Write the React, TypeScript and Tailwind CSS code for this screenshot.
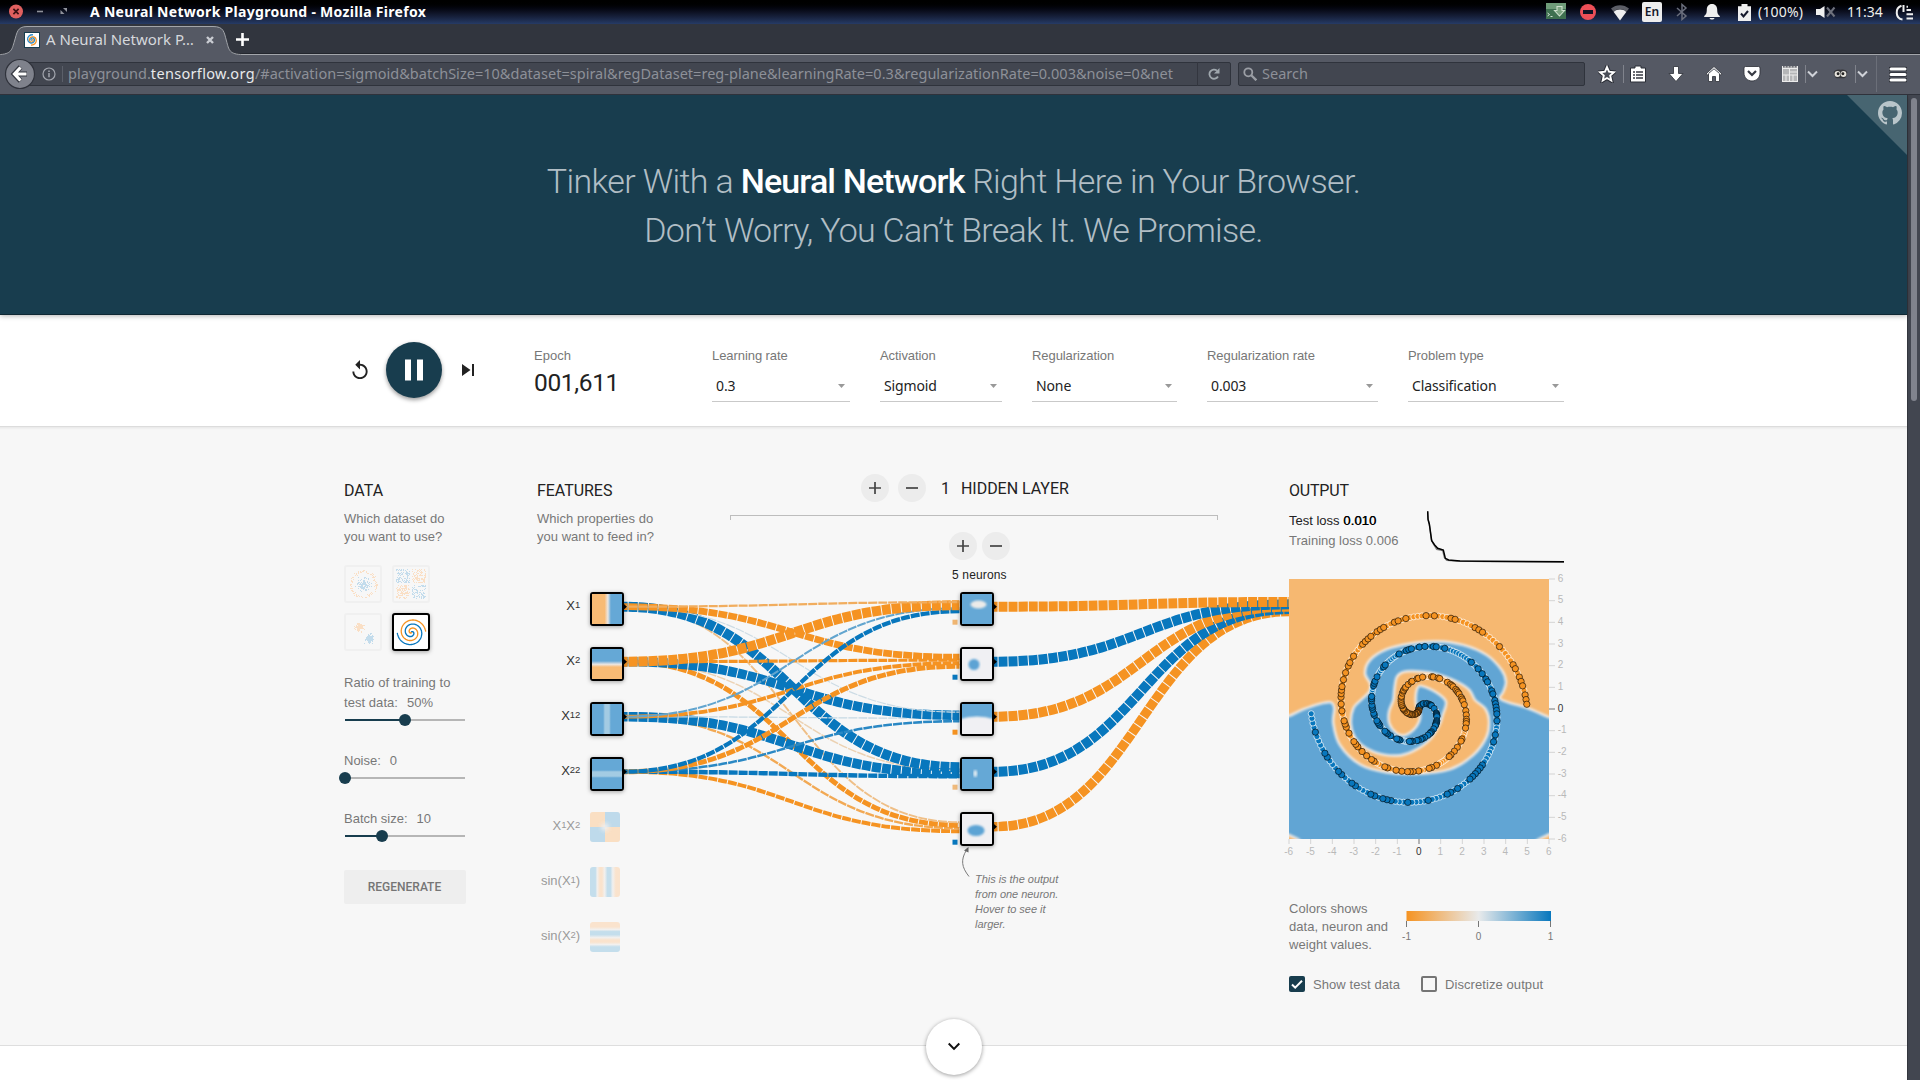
import React from "react";

const ORANGE = "#f59322";
const BLUE = "#0877bd";

const random = (seed: number) => {
  let s = seed;
  return () => {
    s = (s * 1664525 + 1013904223) % 4294967296;
    return s / 4294967296;
  };
};

/* ---------- colour scale shared by links and biases ---------- */
const mix = (a: number[], b: number[], t: number) =>
  `rgb(${a.map((v, i) => Math.round(v + (b[i] - v) * t)).join(",")})`;
const weightColor = (w: number) =>
  w < 0
    ? mix([232, 234, 235], [245, 147, 34], Math.min(1, -w))
    : mix([232, 234, 235], [8, 119, 189], Math.min(1, w));

/* ---------- window title bar ---------- */
function TitleBar() {
  return (
    <div className="flex h-6 items-center bg-linear-to-b from-black via-[#0d1122] to-[#263b66] pb-0.5 font-['Noto_Sans',sans-serif] text-[14px] text-[#eeeeec]">
      <svg className="ml-2 size-4" viewBox="0 0 16 16">
        <circle cx="8" cy="8.500" r="7" fill="#e0605f" />
        <path d="M5.400 5.900l5.200 5.200M10.600 5.900l-5.200 5.200" stroke="#3b1114" strokeWidth="1.700" />
      </svg>
      <svg className="ml-2 size-4" viewBox="0 0 16 16">
        <path d="M5 8.500h6" stroke="#8f929b" strokeWidth="1.600" />
      </svg>
      <svg className="ml-2 size-4" viewBox="0 0 16 16">
        <path d="M7 5h4v4zM4.500 7l4 4h-4z" fill="#8f929b" />
      </svg>
      <span className="ml-[18px] w-[345px] font-bold tracking-[0.3px] whitespace-nowrap text-white">
        A Neural Network Playground - Mozilla Firefox
      </span>
      <div className="ml-auto flex h-[22px] items-center pr-[7px]">
        <svg className="h-4 w-5" viewBox="0 0 20 16">
          <rect width="20" height="16" fill="#3f7050" />
          <rect y="0" width="20" height="6" fill="#6f9c79" />
          <path d="M11 3.500h5v4h2.500L13.500 13 8.500 7.500H11z" fill="#7da582" stroke="#cfe0ce" strokeWidth="1.100" />
          <path d="M1.500 10l2 1.500-2 1.500M4.500 13.500h2" stroke="#d5e5d5" fill="none" />
        </svg>
        <svg className="relative top-px ml-[14px] size-4" viewBox="0 0 16 16">
          <circle cx="8" cy="8" r="8" fill="#ed4f57" />
          <rect x="3" y="6" width="10" height="4" fill="#101426" />
        </svg>
        <svg className="relative top-px ml-[15px] h-[18px] w-[18px]" viewBox="0 0 18 18">
          <path d="M0 5.500C5 1 13 1 18 5.500L15.500 8.800C12 5.500 6 5.500 2.500 8.800z" fill="#5c5e66" />
          <path d="M2.700 9C6 5.800 12 5.800 15.300 9L9 17.500z" fill="#efefef" />
        </svg>
        <span className="relative top-px ml-[13px] flex h-5 w-5 items-center justify-center rounded-[2px] bg-[#ededed] text-[12px] leading-none font-semibold text-[#15182a]">
          En
        </span>
        <svg className="relative top-px ml-3 h-[18px] w-4" viewBox="0 0 16 18">
          <path d="M3 5l9 8-4 3.500v-15L12 5l-9 8" stroke="#6a6e7c" strokeWidth="1.500" fill="none" />
        </svg>
        <svg className="relative top-px ml-[14px] h-[18px] w-4" viewBox="0 0 16 18">
          <path d="M8 1c3.500 0 5.200 2.500 5.200 5.500 0 4 .8 5 2.600 6.500v1H.2v-1c1.800-1.500 2.600-2.500 2.600-6.500C2.800 3.500 4.500 1 8 1zM5.500 15h5c-.5 2-4.500 2-5 0z" fill="#efefef" />
        </svg>
        <svg className="relative top-px ml-[18px] h-[17px] w-[13px]" viewBox="0 0 13 17">
          <path d="M3.500 0h6v2.200H13V17H0V2.200h3.500z" fill="#efefef" />
          <path d="M3 9.500l2.500 3L10 7" stroke="#14182b" strokeWidth="2" fill="none" />
        </svg>
        <span className="ml-[7px] w-[46px] tracking-[0.2px]">(100%)</span>
        <svg className="relative top-px ml-[12px] h-3 w-[20px]" viewBox="0 0 20 12">
          <path d="M0 3h4l4.500-3v12L4 9H0z" fill="#efefef" />
          <path d="M11 1.500l7.500 9M18.500 1.500l-7.500 9" stroke="#6e717c" strokeWidth="2" />
        </svg>
        <span className="ml-[11px] w-[36px]">11:34</span>
        <svg className="relative top-px ml-3 h-[17px] w-[18px]" viewBox="0 0 18 17">
          <path d="M6.500 1.800C-.2 4 .2 14.500 7.500 15.500M8.500 1v7" stroke="#efefef" strokeWidth="2" fill="none" />
          <path d="M11.500 6h4.500M11.500 10.200h6.500M11.500 14.500h6.500M11.500 2.800h1.500" stroke="#efefef" strokeWidth="2" />
        </svg>
      </div>
    </div>
  );
}

function TabBar() {
  return (
    <div className="relative flex h-[31px] items-center bg-[#31353e] font-['Noto_Sans',sans-serif] text-[15px] text-[#d6d8dc]">
      <svg className="absolute inset-0 h-[31px] w-[1920px]" viewBox="0 0 1920 31">
        <path d="M0 29.500H1920" stroke="#23262d" />
        <path
          d="M-2 30.500C12 30.500 12 25 14.500 17S17 2.500 27 2.500H213C224 2.500 224 8 226.500 17S229 30.500 243 30.500H1922V33H-2z"
          fill="#555964"
          stroke="#a3a6ab"
        />
      </svg>
      <svg className="relative ml-6 size-4" viewBox="0 0 16 16">
        <rect x=".5" y=".5" width="15" height="15" fill="#fff" stroke="#183d4e" />
        <path d="M8 8c1-1 2 1 .5 1.800C6 11 4.300 8 6 6c2-2.200 6-1.200 6.300 2 .3 3-2.300 5.300-5.300 5" stroke={ORANGE} strokeWidth="1.300" fill="none" />
        <path d="M8 8c-1 .7-1.800-.8-.5-1.800 2-1.200 4 1.500 2.600 3.500-2 2.500-6 1.200-6.500-2C3.200 4.500 6 2.500 9 2.800" stroke="#2c8bc9" strokeWidth="1.300" fill="none" />
      </svg>
      <span className="relative ml-[6px] w-[152px] whitespace-nowrap">A Neural Network P…</span>
      <svg className="relative ml-[7px] size-[10px]" viewBox="0 0 10 10">
        <path d="M2 2l6 6M8 2L2 8" stroke="#c9ccd2" strokeWidth="2.400" />
      </svg>
      <svg className="relative ml-[20px] size-[15px]" viewBox="0 0 15 15">
        <path d="M7.500 1v13M1 7.500h13" stroke="#fff" strokeWidth="2.600" />
      </svg>
    </div>
  );
}

const Sep = ({ tall = false }: { tall?: boolean }) => (
  <span className={tall ? "ml-2 h-9 w-px bg-[#6b6f79]" : "ml-[7px] h-[18px] w-px bg-[#80838c]"} />
);
const Chevron = () => (
  <svg className="ml-px h-2 w-[11px]" viewBox="0 0 11 8">
    <path d="M1 1.500l4.500 4.500L10 1.500" stroke="#cfd2d8" strokeWidth="2" fill="none" />
  </svg>
);

function Toolbar() {
  return (
    <div className="flex h-10 items-center border-b border-[#2f323b] bg-[#555964] pb-px font-['Noto_Sans',sans-serif] text-[14.500px] text-[#8d9098]">
      <svg className="relative z-10 ml-1 size-8 shrink-0" viewBox="0 0 32 32">
        <circle cx="16" cy="16" r="14.500" fill="#7f828c" stroke="#30333c" strokeWidth="1.200" />
        <path d="M16.500 9L10 16l6.500 7M10.500 16H23" stroke="#33363f" strokeWidth="5" fill="none" />
        <path d="M16.500 9.500L10.500 16l6 6.500M11 16h11.500" stroke="#fff" strokeWidth="3.200" fill="none" />
      </svg>
      <div className="-ml-2 flex h-6 w-[1203px] items-center rounded-r-[2px] border border-[#2f333c] bg-[#424650] pl-[13px]">
        <svg className="size-[14px] shrink-0" viewBox="0 0 14 14">
          <circle cx="7" cy="7" r="6" fill="none" stroke="#a2a5ad" strokeWidth="1.200" />
          <path d="M7 6v4.300M7 3.500v1.500" stroke="#a2a5ad" strokeWidth="1.500" />
        </svg>
        <span className="ml-[6px] h-4 w-px shrink-0 bg-[#5b5f69]" />
        <span className="ml-[5px] w-[1112px] shrink-0 whitespace-nowrap">
          <span className="tracking-[0.050px]">playground.</span>
          <span className="tracking-[0.320px] text-[#e8e9eb]">tensorflow.org</span>
          <span className="tracking-[0.020px]">
            /#activation=sigmoid&amp;batchSize=10&amp;dataset=spiral&amp;regDataset=reg-plane&amp;learningRate=0.3&amp;regularizationRate=0.003&amp;noise=0&amp;net
          </span>
        </span>
        <span className="ml-[17px] h-6 w-px shrink-0 bg-[#33363f]" />
        <svg className="ml-[10px] size-3 shrink-0" viewBox="0 0 12 12">
          <path d="M10 8.500A4.600 4.600 0 1 1 9 2.600" stroke="#9fa7ad" strokeWidth="1.800" fill="none" />
          <path d="M11.500 0v5.500H6z" fill="#9fa7ad" />
        </svg>
      </div>
      <div className="ml-[7px] flex h-6 w-[347px] items-center rounded-[2px] border border-[#2f333c] bg-[#424650] pl-1">
        <svg className="size-[14px]" viewBox="0 0 14 14">
          <circle cx="5.300" cy="5.300" r="4" fill="none" stroke="#9b9ea5" strokeWidth="1.800" />
          <path d="M8.300 8.300l5 5" stroke="#9b9ea5" strokeWidth="2.300" />
        </svg>
        <span className="ml-[5px]">Search</span>
      </div>
      <svg className="ml-[13px] size-[18px]" viewBox="0 0 18 18">
        <path d="M9 2l2 4.700 5 .5-3.800 3.400 1.100 5L9 13l-4.300 2.600 1.100-5L2 7.200l5-.5z" fill="none" stroke="#2b2e36" strokeWidth="4" />
        <path d="M9 2l2 4.700 5 .5-3.800 3.400 1.100 5L9 13l-4.300 2.600 1.100-5L2 7.200l5-.5z" fill="#4a4e58" stroke="#fff" strokeWidth="1.900" />
      </svg>
      <Sep />
      <svg className="ml-[6px] h-[18px] w-4" viewBox="0 0 16 18">
        <path d="M5 3V1h6v2h4.500v14H.5V3z" fill="#fff" stroke="#2b2e36" />
        <path d="M3 7h2M6 7h7M3 10h2M6 10h7M3 13h2M6 13h7" stroke="#363942" strokeWidth="1.500" />
      </svg>
      <svg className="ml-[22px] size-4" viewBox="0 0 16 16">
        <path d="M5.500.5h5v7H15L8 15.500 1 7.500h4.500z" fill="#fff" stroke="#2b2e36" strokeWidth=".8" />
      </svg>
      <svg className="ml-[21px] h-4 w-[18px]" viewBox="0 0 18 16">
        <path d="M9 .5L1 8l1 1.300L3.500 8v7.500h4v-5h3v5h4V8L16 9.300 17 8z" fill="#fff" stroke="#2b2e36" strokeWidth=".8" />
        <path d="M3.500 7.500L9 2.800l5.500 4.700" stroke="#4a4e58" fill="none" />
      </svg>
      <svg className="ml-5 h-4 w-[18px]" viewBox="0 0 18 16">
        <path d="M1 2q0-1.500 1.500-1.500h13Q17 .5 17 2v5c0 4.500-3.500 8-8 8s-8-3.500-8-8z" fill="#fff" stroke="#2b2e36" strokeWidth=".8" />
        <path d="M5 5l4 4 4-4" stroke="#363942" strokeWidth="2.200" fill="none" />
      </svg>
      <svg className="ml-[21px] size-4" viewBox="0 0 16 16">
        <path d="M0 0h16v16H0z" fill="#b5b6b8" />
        <path d="M0 2.500h16M7.500 3v13M0 9h16M7.500 6h8M4 9v7M11 9v7M.5 0v16M15.500 0v16M0 15.500h16" stroke="#ececec" />
        <path d="M1 .8h14" stroke="#4b4e56" strokeDasharray="1.500 1.500" />
      </svg>
      <Sep />
      <Chevron />
      <svg className="ml-[15px] h-[12px] w-[15px]" viewBox="0 0 16 14">
        <path d="M0 5q2-4 8-3 6-1 8 3-1 7-4 7H4Q1 12 0 5z" fill="#35363a" />
        <circle cx="4.500" cy="7" r="3.400" fill="#e7e4dd" />
        <circle cx="11.500" cy="7" r="3.400" fill="#e7e4dd" />
        <circle cx="5.200" cy="6.800" r="1.700" fill="#222" />
        <circle cx="10.800" cy="6.800" r="1.700" fill="#222" />
      </svg>
      <Sep />
      <Chevron />
      <Sep tall />
      <svg className="ml-[12px] h-[17px] w-[18px]" viewBox="0 0 18 17">
        <path d="M1.500 3h15M1.500 8.500h15M1.500 14h15" stroke="#2b2e36" strokeWidth="4.600" strokeLinecap="round" />
        <path d="M2 3h14M2 8.500h14M2 14h14" stroke="#fff" strokeWidth="3" strokeLinecap="round" />
      </svg>
    </div>
  );
}

/* ---------- page header and controls ---------- */
function Header() {
  return (
    <header className="relative h-[220px] border-b border-[#0f2833] bg-[#183d4e] pt-[62px] text-center font-['Roboto',sans-serif] text-[34px] leading-[49.300px] font-light tracking-[-0.630px] text-[#b1bec5] shadow-[0_1px_5px_rgba(0,0,0,0.3)]">
      <h1>
        Tinker With a <b className="font-medium tracking-[-0.880px] text-white">Neural Network</b> Right Here in Your Browser.
        <br />
        <span className="tracking-[-0.730px]">Don’t Worry, You Can’t Break It. We Promise.</span>
      </h1>
      <svg className="absolute top-0 right-0 size-[60px]" viewBox="0 0 60 60">
        <path d="M0 0h60v60z" fill="#476571" />
        <path
          transform="translate(31 6) scale(1.500)"
          fill="#b9c5ca"
          d="M8 0C3.580 0 0 3.580 0 8c0 3.540 2.290 6.530 5.470 7.590.4.070.55-.17.55-.38 0-.19-.01-.82-.01-1.490-2.010.37-2.530-.49-2.690-.94-.09-.23-.48-.94-.82-1.130-.28-.15-.68-.52-.01-.53.63-.01 1.080.58 1.230.82.72 1.210 1.870.87 2.330.66.07-.52.28-.87.51-1.070-1.780-.2-3.640-.89-3.640-3.950 0-.87.31-1.590.82-2.150-.08-.2-.36-1.020.08-2.120 0 0 .67-.21 2.200.82.64-.18 1.320-.27 2-.27.68 0 1.360.09 2 .27 1.530-1.040 2.200-.82 2.200-.82.44 1.100.16 1.920.08 2.120.51.56.82 1.270.82 2.150 0 3.070-1.870 3.750-3.650 3.950.29.25.54.73.54 1.480 0 1.070-.01 1.930-.01 2.200 0 .21.15.46.55.38A8.013 8.013 0 0016 8c0-4.420-3.580-8-8-8z"
        />
      </svg>
    </header>
  );
}

const selects = [
  { label: "Learning rate", value: "0.3", box: "ml-[82px] w-[138px]" },
  { label: "Activation", value: "Sigmoid", box: "ml-[30px] w-[122px]" },
  { label: "Regularization", value: "None", box: "ml-[30px] w-[145px]" },
  { label: "Regularization rate", value: "0.003", box: "ml-[30px] w-[171px]" },
  { label: "Problem type", value: "Classification", box: "ml-[30px] w-[156px]" },
];

function Controls() {
  return (
    <section className="flex h-[112px] border-b border-[#dcdcdc] bg-white pl-[350px] font-['Liberation_Sans',sans-serif] text-[13px] leading-4 text-[#777]">
      <div className="flex h-[109px] items-center">
        <svg className="size-5" viewBox="1.500 1 21 21" fill="#222">
          <path d="M12 5V1L7 6l5 5V7c3.310 0 6 2.690 6 6s-2.690 6-6 6-6-2.690-6-6H4c0 4.420 3.580 8 8 8s8-3.580 8-8-3.580-8-8-8z" />
        </svg>
        <div className="ml-4 flex size-14 items-center justify-center rounded-full bg-[#183d4e] shadow-[0_2px_4px_rgba(0,0,0,0.4)]">
          <svg className="size-9" viewBox="0 0 24 24" fill="#fff">
            <path d="M6 19h4V5H6v14zm8-14v14h4V5h-4z" />
          </svg>
        </div>
        <svg className="ml-[14px] size-6" viewBox="0 0 24 24" fill="#222">
          <path d="M6 18l8.500-6L6 6v12zM16 6v12h2V6h-2z" />
        </svg>
      </div>
      <div className="ml-[54px] w-24 pt-[33px]">
        Epoch
        <div className="mt-1 font-['Roboto',sans-serif] text-[24.500px] leading-[30px] font-normal tracking-[-0.350px] text-[#222]">001,611</div>
      </div>
      {selects.map((s) => (
        <div key={s.label} className={`${s.box} pt-[33px]`}>
          <span className="tracking-[-0.070px]">{s.label}</span>
          <div className="mt-[7px] flex h-[31px] items-center justify-between border-b border-[#c9c9c9] pr-[5px] pl-1 font-['Noto_Sans',sans-serif] text-[14px] tracking-[-0.120px] text-[#222]">
            {s.value}
            <svg className="h-1 w-[7px]" viewBox="0 0 7 4">
              <path d="M0 0h7L3.500 4z" fill="#999" />
            </svg>
          </div>
        </div>
      ))}
    </section>
  );
}

/* ---------- data column ---------- */
const OL = "#fadfc5";
const BL = "#c3dcec";

function scatter(kind: string) {
  const r = random(kind.length * 977 + 5);
  const out: { x: number; y: number; c: string }[] = [];
  const gauss = () => (r() + r() + r() - 1.5) / 1.5;
  for (let i = 0; i < 230; i++) {
    if (kind === "circle") {
      const a = r() * Math.PI * 2;
      const d = 11 + r() * 3;
      if (i % 2) out.push({ x: 17 + Math.cos(a) * d, y: 17 + Math.sin(a) * d, c: OL });
      else out.push({ x: 17 + gauss() * 9, y: 17 + gauss() * 9, c: BL });
    } else if (kind === "quadrants") {
      for (let k = 0; k < 2; k++) {
        const x = 2 + r() * 29;
        const y = 2 + r() * 29;
        if (Math.abs(x - 16.500) < 1 || Math.abs(y - 16.500) < 1) continue;
        out.push({ x, y, c: (x - 16.500) * (y - 16.500) > 0 ? BL : OL });
      }
    } else {
      const o = i % 2 === 0;
      out.push({ x: (o ? 13 : 23) + gauss() * 6, y: (o ? 11.500 : 23) + gauss() * 6, c: o ? OL : BL });
    }
  }
  return out;
}

function Thumb({ kind }: { kind: string }) {
  return (
    <div className="size-[38px] rounded-[3px] border-2 border-[#f0f0f0]">
      <svg className="size-[34px]" viewBox="0 0 34 34" shapeRendering="crispEdges">
        {scatter(kind).map((p, i) => (
          <rect key={i} x={Math.round(p.x)} y={Math.round(p.y)} width="1" height="1" fill={p.c} />
        ))}
      </svg>
    </div>
  );
}

const spiral = (scale: number, phase: number, cx: number, cy: number) =>
  Array.from({ length: 250 }, (_, i) => {
    const r = (i / 250) * 5;
    const t = ((1.750 * i) / 250) * 2 * Math.PI + phase;
    return [cx + r * Math.sin(t) * scale, cy - r * Math.cos(t) * scale];
  });
const polyline = (pts: number[][]) => pts.map((p) => p[0].toFixed(1) + "," + p[1].toFixed(1)).join(" ");

function Slider({ pct }: { pct: number }) {
  return (
    <div className="relative flex h-3 w-[121px] items-center pl-px">
      <div className="h-0.5 bg-[#183d4e]" style={{ width: `${pct}%` }} />
      <div className="h-0.5 flex-1 bg-[#b6b6b6]" />
      <div className="absolute -ml-[6px] size-3 rounded-full bg-[#183d4e]" style={{ left: `${pct + 0.8}%` }} />
    </div>
  );
}

function DataColumn() {
  return (
    <div className="w-[193px] shrink-0">
      <h2 className="relative top-px font-['Roboto',sans-serif] text-[16px] leading-5 text-[#222]">DATA</h2>
      <p className="mt-[10px] w-[120px] leading-[18px]">
        Which dataset do
        <br />
        you want to use?
      </p>
      <div className="mt-[19px] grid w-[86px] grid-cols-2 gap-[10px]">
        <Thumb kind="circle" />
        <Thumb kind="quadrants" />
        <Thumb kind="gauss" />
        <div className="size-[38px] rounded-[3px] border-2 border-black bg-white shadow-[0_1px_4px_rgba(0,0,0,0.35)]">
          <svg className="size-[34px]" viewBox="0 0 34 34" fill="none" strokeWidth="1.300">
            <polyline points={polyline(spiral(2.850, 0, 17.500, 17.300))} stroke={BLUE} />
            <polyline points={polyline(spiral(2.850, Math.PI, 17.500, 17.300))} stroke={ORANGE} />
          </svg>
        </div>
      </div>
      <div className="mt-[22px] leading-5">
        <p className="tracking-[0.050px]">
          Ratio of training to
          <br />
          test data:<span className="ml-[9px]">50%</span>
        </p>
        <div className="mt-px">
          <Slider pct={50} />
        </div>
        <p className="mt-[25px]">Noise:<span className="ml-[9px]">0</span></p>
        <div className="mt-px">
          <Slider pct={0} />
        </div>
        <p className="mt-[25px]">Batch size:<span className="ml-[9px]">10</span></p>
        <div className="mt-px">
          <Slider pct={31} />
        </div>
      </div>
      <button className="mt-7 block h-[34px] w-[122px] rounded-[2px] bg-[#eeeeee] pr-px font-['Roboto',sans-serif] text-[12px] font-medium text-[#757575]">
        REGENERATE
      </button>
    </div>
  );
}

/* ---------- network ---------- */
// weights[target][source]
const hiddenWeights = [
  [-0.700, -5, 0.600, 1.800],
  [-3.200, -1.200, -1.600, -2.200],
  [0.120, 4.700, 0.150, 0.850],
  [5, -0.280, 4.800, 1.900],
  [-0.500, -2.200, -0.750, -1.650],
];
const outputWeights = [-5, 5, -5, 5, -4.700];

const nodeY = (i: number) => 606.700 + 55 * i;

function link(x1: number, y1: number, x2: number, y2: number) {
  const m = (x1 + x2) / 2;
  return `M${x1} ${y1}C${m} ${y1} ${m} ${y2} ${x2} ${y2}`;
}

function Links() {
  const links: { d: string; w: number }[] = [];
  hiddenWeights.forEach((row, t) =>
    row.forEach((w, s) => {
      links.push({ d: link(623.500, nodeY(s), 959.500, nodeY(t) + ((s - 1.500) / 4) * 12), w });
    }),
  );
  outputWeights.forEach((w, s) => {
    links.push({ d: link(993.500, nodeY(s), 1290, 606.700 + ((s - 2) / 5) * 12), w });
  });
  links.reverse();
  return (
    <svg className="absolute top-0 left-0 h-[400px] w-[752px]" viewBox="537 592 752 400" fill="none">
      {links.map((l, i) => (
        <path
          key={i}
          d={l.d}
          stroke={weightColor(l.w)}
          strokeWidth={1 + (9 * Math.min(5, Math.abs(l.w))) / 5}
          strokeDasharray="9 1"
          strokeDashoffset="-5"
        />
      ))}
      {[0, 1, 2, 3].map((i) => (
        <path key={i} d={`M623 ${nodeY(i) - 3.500}l4 3.500l-4 3.500z`} fill="#000" />
      ))}
      {[0, 1, 2, 3, 4].map((i) => (
        <path key={i} d={`M993 ${nodeY(i) - 3.500}l4 3.500l-4 3.500z`} fill="#000" />
      ))}
      {[-0.600, 1, -1, -0.550, 1].map((b, i) => (
        <rect key={i} x="952.500" y={619.700 + 55 * i} width="5" height="5" fill={weightColor(b)} />
      ))}
      <path d="M969 876.500C961.500 867 960.500 860 966.500 850" stroke="#7a7a7a" />
      <path d="M968.500 847l-4.500 3.500l4.500 2z" fill="#666" />
    </svg>
  );
}

const featureFill: Record<string, React.ReactNode> = {
  x1: <div className="size-full bg-linear-to-r from-[#f8bb75] from-42% via-[#e9e6e3] via-53% to-[#65a8d6] to-63%" />,
  x2: <div className="size-full bg-linear-to-b from-[#65a8d6] from-40% via-[#e9e6e3] via-51% to-[#f8bb75] to-60%" />,
  x12: <div className="size-full bg-[linear-gradient(90deg,#65a8d6_37%,#a3cbe3_43%,#a3cbe3_57%,#65a8d6_63%)]" />,
  x22: <div className="size-full bg-[linear-gradient(180deg,#65a8d6_37%,#a3cbe3_43%,#a3cbe3_57%,#65a8d6_63%)]" />,
  x1x2: (
    <div className="grid size-full grid-cols-2 bg-[#f0eeeb]">
      <div className="bg-[#fadfc3]" />
      <div className="bg-[#bedaeb]" />
      <div className="bg-[#bedaeb]" />
      <div className="bg-[#fadfc3]" />
      <div className="absolute top-[11px] left-[11px] size-2 rounded-full bg-[#eeeeee] blur-[2px]" />
    </div>
  ),
  sinx1: (
    <div className="size-full bg-[linear-gradient(90deg,#c4deec_18%,#f2f0ee_24%,#fae3cd_33%,#fae3cd_40%,#f2f0ee_49%,#c4deec_58%,#c4deec_68%,#f2f0ee_76%,#fae3cd_86%)]" />
  ),
  sinx2: (
    <div className="size-full bg-[linear-gradient(180deg,#fae3cd_16%,#f2f0ee_25%,#c4deec_32%,#c4deec_42%,#f2f0ee_52%,#fae3cd_60%,#fae3cd_67%,#f2f0ee_75%,#c4deec_83%)]" />
  ),
};

const Small = ({ children }: { children: React.ReactNode }) => (
  <span className="relative -top-[2px] text-[9.500px] tracking-[-0.200px]">{children}</span>
);
const features = [
  { id: "x1", on: true, label: <>X<Small>1</Small></> },
  { id: "x2", on: true, label: <>X<Small>2</Small></> },
  { id: "x12", on: true, label: <>X<Small>12</Small></> },
  { id: "x22", on: true, label: <>X<Small>22</Small></> },
  { id: "x1x2", on: false, label: <>X<Small>1</Small>X<Small>2</Small></> },
  { id: "sinx1", on: false, label: <>sin(X<Small>1</Small>)</> },
  { id: "sinx2", on: false, label: <>sin(X<Small>2</Small>)</> },
];

const neuronArt = [
  <svg className="size-[30px]" viewBox="0 0 30 30" key="0">
    <rect width="30" height="30" fill="#65a8d6" />
    <ellipse cx="16.500" cy="10.500" rx="8" ry="4" fill="#ecebe9" filter="url(#soft)" />
  </svg>,
  <svg className="size-[30px]" viewBox="0 0 30 30" key="1">
    <rect width="30" height="30" fill="#f0f0f3" />
    <circle cx="12" cy="15.500" r="5.500" fill="#5ca3d4" filter="url(#soft)" />
  </svg>,
  <svg className="size-[30px]" viewBox="0 0 30 30" key="2">
    <rect width="30" height="30" fill="#f0f0f3" />
    <path d="M-3-3h36V15.500Q15 9.500-3 15.500z" fill="#65a8d6" filter="url(#soft)" />
    <path d="M0 0h30v11H0z" fill="#65a8d6" />
  </svg>,
  <svg className="size-[30px]" viewBox="0 0 30 30" key="3">
    <rect width="30" height="30" fill="#65a8d6" />
    <ellipse cx="13.300" cy="14.500" rx="1.800" ry="3.500" fill="#e4edf3" filter="url(#soft)" />
  </svg>,
  <svg className="size-[30px]" viewBox="0 0 30 30" key="4">
    <rect width="30" height="30" fill="#f0f0f3" />
    <ellipse cx="14" cy="16.500" rx="8.500" ry="5.500" fill="#5ca3d4" filter="url(#soft)" />
  </svg>,
];

function RoundButton({ sign }: { sign: string }) {
  return (
    <button className="flex size-7 items-center justify-center rounded-full bg-[#ececec]">
      <svg className="size-3" viewBox="0 0 12 12" stroke="#444" strokeWidth="1.700">
        <path d={sign === "+" ? "M6 0v12M0 6h12" : "M0 6h12"} />
      </svg>
    </button>
  );
}

function Network() {
  return (
    <div className="w-[752px] shrink-0">
      <svg className="absolute size-0">
        <filter id="soft">
          <feGaussianBlur stdDeviation="1.100" />
        </filter>
      </svg>
      <div className="flex h-[112px]">
        <div className="w-[193px]">
          <h2 className="relative top-px font-['Roboto',sans-serif] text-[16px] leading-5 tracking-[-0.050px] text-[#222]">FEATURES</h2>
          <p className="mt-[10px] leading-[18px] tracking-[0.030px]">
            Which properties do
            <br />
            you want to feed in?
          </p>
        </div>
        <div className="-mt-[6px] w-[488px]">
          <div className="flex items-center pl-[131px] font-['Roboto',sans-serif] text-[16px] text-[#222]">
            <RoundButton sign="+" />
            <span className="ml-[9px]">
              <RoundButton sign="-" />
            </span>
            <span className="mt-0.5 ml-[15px]">1</span>
            <span className="mt-0.5 ml-[11px] tracking-[-0.040px]">HIDDEN LAYER</span>
          </div>
          <div className="mt-[13px] h-[5px] border border-b-0 border-[#bdbdbd]" />
          <div className="mt-3 flex gap-[5px] pl-[219px]">
            <RoundButton sign="+" />
            <RoundButton sign="-" />
          </div>
          <div className="mt-[5px] pl-[222px] text-[12px] leading-5 tracking-[0.150px] text-[#222]">5 neurons</div>
        </div>
      </div>
      <div className="relative flex">
        <Links />
        <div className="relative w-[87px]">
          {features.map((f) => (
            <div key={f.id} className="flex h-[55px] items-start gap-[10px]">
              <div className={`w-[43px] text-right leading-[27px] whitespace-nowrap ${f.on ? "text-[#333]" : "text-[#9a9a9a]"}`}>{f.label}</div>
              {f.on ? (
                <div className="size-[34px] shrink-0 rounded-[3px] border-2 border-black shadow-[0_1px_4px_rgba(0,0,0,0.35)]">{featureFill[f.id]}</div>
              ) : (
                <div className="relative size-[30px] shrink-0 overflow-hidden rounded-[3px]">{featureFill[f.id]}</div>
              )}
            </div>
          ))}
        </div>
        <div className="relative ml-[336px]">
          {neuronArt.map((art, i) => (
            <div key={i} className="h-[55px]">
              <div className="size-[34px] overflow-hidden rounded-[3px] border-2 border-black shadow-[0_1px_4px_rgba(0,0,0,0.35)]">{art}</div>
            </div>
          ))}
          <p className="mt-[5px] ml-[15px] w-[100px] text-[11px] leading-[15px] italic tracking-[-0.030px]">
            This is the output
            <br />
            from one neuron.
            <br />
            Hover to see it
            <br />
            larger.
          </p>
        </div>
      </div>
    </div>
  );
}

/* ---------- output ---------- */
// Decision boundary between the two classes
const boundary: number[][] = [
  [30, 745], [57, 738], [100, 718], [150, 701], [182, 697], [193, 715], [190, 760], [210, 825], [270, 883], [350, 907], [450, 911],
  [540, 898], [610, 855], [650, 800], [657, 750], [645, 715], [615, 690], [598, 660], [560, 635], [500, 612], [440, 604],
  [400, 606], [380, 622], [373, 660], [370, 690], [357, 725], [358, 760], [378, 788], [402, 796], [430, 780], [447, 755],
  [450, 730], [440, 712], [437, 685], [442, 655], [455, 648], [500, 668], [528, 695], [518, 735], [508, 765], [480, 808],
  [430, 843], [380, 857], [310, 845], [260, 810], [243, 765], [250, 715], [275, 688], [298, 665], [300, 640], [285, 610],
  [300, 570], [350, 538], [420, 521], [500, 514], [580, 525], [650, 555], [695, 600], [708, 635], [700, 665], [690, 685],
  [720, 699], [770, 713], [837, 742], [870, 755], [870, 1070], [837, 1093], [800, 1112], [780, 1140], [110, 1140], [90, 1112],
  [57, 1095], [30, 1080],
];

function smooth(p: number[][]) {
  const n = p.length;
  const at = (i: number) => p[(i + n) % n];
  let d = `M${p[0][0]} ${p[0][1]}`;
  for (let i = 0; i < n; i++) {
    const [a, b, c, e] = [at(i - 1), at(i), at(i + 1), at(i + 2)];
    d += `C${b[0] + (c[0] - a[0]) / 6} ${b[1] + (c[1] - a[1]) / 6} ${c[0] - (e[0] - b[0]) / 6} ${c[1] - (e[1] - b[1]) / 6} ${c[0]} ${c[1]}`;
  }
  return d + "Z";
}

function Heatmap() {
  const r = random(42);
  const dots = [
    ...spiral(65, 0, 447, 717).map((p) => ({ p, c: BLUE, test: r() < 0.500 })),
    ...spiral(65, Math.PI, 447, 717).map((p) => ({ p, c: ORANGE, test: r() < 0.500 })),
  ];
  const ticks = Array.from({ length: 13 }, (_, i) => i - 6);
  return (
    <svg className="h-[320px] w-[290px] overflow-visible font-['Liberation_Sans',sans-serif]" viewBox="57 327 870 960" fontSize="30">
      <clipPath id="plot">
        <rect x="57" y="327" width="780" height="780" />
      </clipPath>
      <filter id="edge">
        <feGaussianBlur stdDeviation="2.500" />
      </filter>
      <g clipPath="url(#plot)">
        <rect x="57" y="327" width="780" height="780" fill="#f6b871" />
        <path d={smooth(boundary)} fill="#61a5d4" />
        <path d={smooth(boundary)} fill="none" stroke="#e9e6e2" strokeWidth="8" filter="url(#edge)" />
      </g>
      {dots.filter((d) => !d.test).map((d, i) => (
        <circle key={i} cx={d.p[0]} cy={d.p[1]} r="9" fill={d.c} stroke="#fff" strokeWidth="3" strokeOpacity=".7" />
      ))}
      {dots.filter((d) => d.test).map((d, i) => (
        <circle key={i} cx={d.p[0]} cy={d.p[1]} r="9.500" fill={d.c} stroke="#000" strokeWidth="3" strokeOpacity=".6" />
      ))}
      {ticks.map((t) => (
        <g key={t} fill={t === 0 ? "#333" : "#b9b9b9"} stroke="none">
          <rect x={445.500 + t * 65} y="1107" width="3" height="15" fill={t === 0 ? "#777" : "#d4d4d4"} />
          <text x={446 + t * 65} y="1154" textAnchor="middle">{t}</text>
          <rect x="837" y={715.500 - t * 65} width="18" height="3" fill={t === 0 ? "#777" : "#d4d4d4"} />
          <text x="863" y={725 - t * 65}>{t}</text>
        </g>
      ))}
    </svg>
  );
}

function Output() {
  return (
    <div className="w-[310px]">
      <h2 className="relative top-px font-['Roboto',sans-serif] text-[16px] leading-5 tracking-[-0.200px] text-[#222]">OUTPUT</h2>
      <div className="flex h-[79px] pt-[11px] leading-5">
        <div className="w-[138px]">
          <div className="text-[#222]">
            Test loss <span className="tracking-[0.100px] text-black [text-shadow:0.400px_0_0_#000]">0.010</span>
          </div>
          <div>Training loss 0.006</div>
        </div>
        <svg className="h-[53px] w-[138px]" viewBox="471 123 414 159" fill="none">
          <path d="M473 124L475 150L479 170L484 208L490 222L500 238L518 242L523 262L530 271L560 273L650 275L882 276" stroke="#888" strokeWidth="4" />
          <path d="M473 124L474 148L478 162L485 212L494 225L503 235L520 240L526 265L536 270L570 273L650 274L882 275" stroke="#000" strokeWidth="4.500" />
        </svg>
      </div>
      <div className="h-[321px]">
        <Heatmap />
      </div>
      <div className="flex leading-[18px]">
        <p className="w-[117px] tracking-[0.040px] whitespace-nowrap">
          Colors shows
          <br />
          data, neuron and
          <br />
          weight values.
        </p>
        <svg className="mt-[11px] h-9 w-[148px] overflow-visible font-['Liberation_Sans',sans-serif]" viewBox="0 0 148 36" fontSize="10" fill="#777">
          <linearGradient id="scale">
            <stop offset="0" stopColor={ORANGE} />
            <stop offset=".5" stopColor="#e8eaeb" />
            <stop offset="1" stopColor={BLUE} />
          </linearGradient>
          <rect x=".5" width="144.500" height="10" fill="url(#scale)" />
          <path d="M.5 10v6M72.500 10v6M144.500 10v6" stroke="#777" />
          <text x="0.500" y="29" textAnchor="middle">-1</text>
          <text x="72.500" y="29" textAnchor="middle">0</text>
          <text x="144.500" y="29" textAnchor="middle">1</text>
        </svg>
      </div>
      <div className="mt-[22px] flex h-4 items-center leading-4">
        <svg className="size-4" viewBox="0 0 16 16">
          <rect width="16" height="16" rx="2" fill="#183d4e" />
          <path d="M3 8.500l3.200 3.200L13 4.800" stroke="#fff" strokeWidth="2" fill="none" />
        </svg>
        <span className="mt-0.5 ml-2 w-[108px] tracking-[0.080px] whitespace-nowrap">Show test data</span>
        <span className="size-4 rounded-[2px] border-2 border-[#757575]" />
        <span className="mt-0.5 ml-2 tracking-[0.080px]">Discretize output</span>
      </div>
    </div>
  );
}

export default function App() {
  return (
    <div className="flex h-[1080px] w-[1920px] flex-col overflow-hidden bg-white">
      <TitleBar />
      <TabBar />
      <Toolbar />
      <div className="flex flex-1 overflow-hidden">
        <div className="flex w-[1907px] flex-col">
          <Header />
          <Controls />
          <main className="relative flex h-[619px] shrink-0 border-b border-[#dedede] bg-[#f7f7f7] pt-[53px] pl-[344px] font-['Liberation_Sans',sans-serif] text-[13px] text-[#777] shadow-[inset_0_4px_3px_-3px_rgba(0,0,0,0.08)]">
            <DataColumn />
            <Network />
            <Output />
            <button className="absolute -bottom-[30px] left-[926px] flex size-14 items-center justify-center rounded-full bg-white shadow-[0_1px_4px_rgba(0,0,0,0.4)]">
              <svg className="size-6" viewBox="0 0 24 24" fill="#111">
                <path d="M7.410 7.840L12 12.420l4.590-4.580L18 9.250l-6 6-6-6z" />
              </svg>
            </button>
          </main>
        </div>
        <div className="w-[13px] border-l border-[#33363e] bg-[#424650] pt-[3px] pl-[3px]">
          <div className="h-[303px] w-[6px] rounded-full bg-[#80838d]" />
        </div>
      </div>
    </div>
  );
}
